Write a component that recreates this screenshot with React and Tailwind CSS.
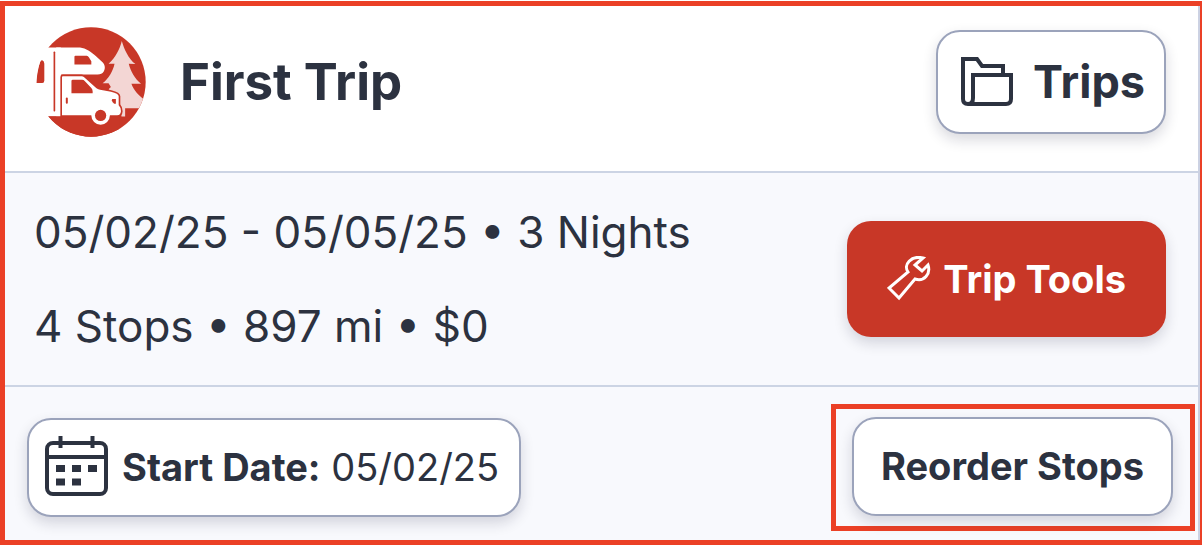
const outlineButton =
  'flex items-center whitespace-nowrap rounded-3xl border-2 border-[#9ba3bb] bg-white text-[#2c3240] shadow-[0_6px_14px_rgba(20,20,50,0.16)]'

function Logo() {
  return (
    <svg viewBox="20 20 330 332" className="size-[110px] shrink-0" role="img" aria-label="RV trips">
      <defs>
        <clipPath id="badge">
          <circle cx="185" cy="186" r="165" />
        </clipPath>
      </defs>
      <g clipPath="url(#badge)">
        <path d="M20 20 H352 V352 H20 V289 H94 V82 H20 Z" fill="#c83727" />
        {/* tree */}
        <path
          d="M278 62 C284 84 298 116 319 132 L299 131 C304 152 318 178 336 191 L307 191 C314 212 330 228 352 244 L330 265 L288 265 L288 290 L277 290 L270 230 L238 208 L245 201 L238 190 L220 190 C238 176 252 152 256 131 L238 131 C258 114 272 86 278 62 Z"
          fill="#f3d6d4"
        />
        {/* camper */}
        <path
          d="M80 82 H152 C170 84 185 95 201 109 L219 126 C228 134 229 146 223 155 C219 161 214 163 205 163 H95 V289 H80 Z"
          fill="#fff"
        />
        <path d="M138 107 H172 Q176 107 179 112 L186 123 V133 H135 V110 Q135 107 138 107 Z" fill="#c83727" />
        <rect x="72" y="94" width="5" height="181" rx="2" fill="#c83727" />
        <path d="M20 189 C22 160 28 134 32 124 Q34 120 38 120 Q44 122 44 130 V182 Q44 189 38 189 Z" fill="#c83727" />
        {/* cab */}
        <path
          d="M95 289 V171 Q95 166 100 166 H157 Q162 166 166 170 L203 203 Q208 206 213 207 L246 213 Q271 219 271 229 V255 Q278 262 278 274 Q277 289 264 289 Z"
          fill="#fff"
          stroke="#c83727"
          strokeWidth="5"
        />
        <path d="M130 179 H158 Q163 179 166 183 L186 204 Q190 208 190 215 V220 H126 V183 Q126 179 130 179 Z" fill="#c83727" />
        <rect x="109" y="233" width="6" height="19" rx="3" fill="#c83727" />
        <path d="M249 237 H260 V252 H255 Q249 249 248 241 Z" fill="#c83727" />
        <path d="M10 290 H270 V360 H10 Z" fill="#c83727" />
        <circle cx="214" cy="287" r="28" fill="#fff" />
        <circle cx="214" cy="287" r="17" fill="#c83727" />
      </g>
    </svg>
  )
}

function FolderIcon() {
  return (
    <svg viewBox="0 0 52 50" className="h-[50px] w-[52px] shrink-0" fill="none" stroke="currentColor" strokeWidth="4" aria-hidden="true">
      <path d="M42 16 V9 H21 L16 2 H2 V42 Q2 47 7 47 H45 Q50 47 50 42 V18 H12 V41 Q12 47 7 47" />
    </svg>
  )
}

function WrenchIcon() {
  return (
    <svg viewBox="0 0 44 46" className="h-[46px] w-11 shrink-0" fill="none" stroke="currentColor" strokeWidth="3" aria-hidden="true">
      <path d="M36 2 C24 -1 16 9 21 16 L2 32 L12 42 L28 23 C37 26 44 18 41 9 L35 15 L28 9 Z" />
    </svg>
  )
}

function CalendarIcon() {
  return (
    <svg viewBox="0 0 63 64" className="h-16 w-[63px] shrink-0" fill="none" stroke="currentColor" strokeWidth="4" aria-hidden="true">
      <rect x="2" y="7" width="59" height="51" rx="6" />
      <path d="M2 21 H61 M15.5 0 V12 M47.5 0 V12" />
      <path d="M11 32.5 H20 M27 32.5 H36 M43 32.5 H52 M11 46 H20 M27 46 H36" strokeWidth="7" />
    </svg>
  )
}

export default function App() {
  return (
    <div className="bg-white py-px font-['Inter',sans-serif] text-[#2c3240]">
      <div className="border-y-5 border-r-2 border-l-5 border-[#eb4026]">
        <div className="border-r-2 border-[#ccd2e3]">
          <header className="flex items-center justify-between border-b-2 border-[#ccd4e4] pt-[21px] pr-8 pb-[34px] pl-[31px]">
            <div className="flex items-center gap-[34px]">
              <Logo />
              <h1 className="text-[51px] leading-16 font-bold">First Trip</h1>
            </div>
            <button type="button" className={`${outlineButton} h-[104px] gap-5 pr-[19px] pl-[23px] text-[45px] font-bold`}>
              <FolderIcon />
              Trips
            </button>
          </header>

          <section className="flex items-center justify-between border-b-2 border-[#ccd4e4] bg-[#f8f9fd] py-[27px] pr-8 pl-[29px]">
            <div className="flex flex-col gap-[30px] text-[44px] leading-16">
              <p>05/02/25 - 05/05/25 • 3 Nights</p>
              <p>4 Stops • 897 mi • $0</p>
            </div>
            <button
              type="button"
              className="flex h-[116px] items-center gap-3 rounded-3xl bg-[#c83727] px-10 text-[38px] font-bold whitespace-nowrap text-white shadow-[0_6px_14px_rgba(20,20,50,0.16)]"
            >
              <WrenchIcon />
              Trip Tools
            </button>
          </section>

          <footer className="flex items-center justify-between bg-[#f8f9fd] pt-[17px] pr-[3px] pb-[9px] pl-[22px]">
            <button type="button" className={`${outlineButton} h-[99px] gap-[14px] pr-5 pl-4 text-[38px]`}>
              <CalendarIcon />
              <span>
                <strong className="font-bold">Start Date:</strong> 05/02/25
              </span>
            </button>
            <div className="border-5 border-[#eb4026] pt-2 pr-[17px] pb-[10px] pl-4">
              <button type="button" className={`${outlineButton} h-[99px] px-[27px] text-[38px] font-bold`}>
                Reorder Stops
              </button>
            </div>
          </footer>
        </div>
      </div>
    </div>
  )
}
